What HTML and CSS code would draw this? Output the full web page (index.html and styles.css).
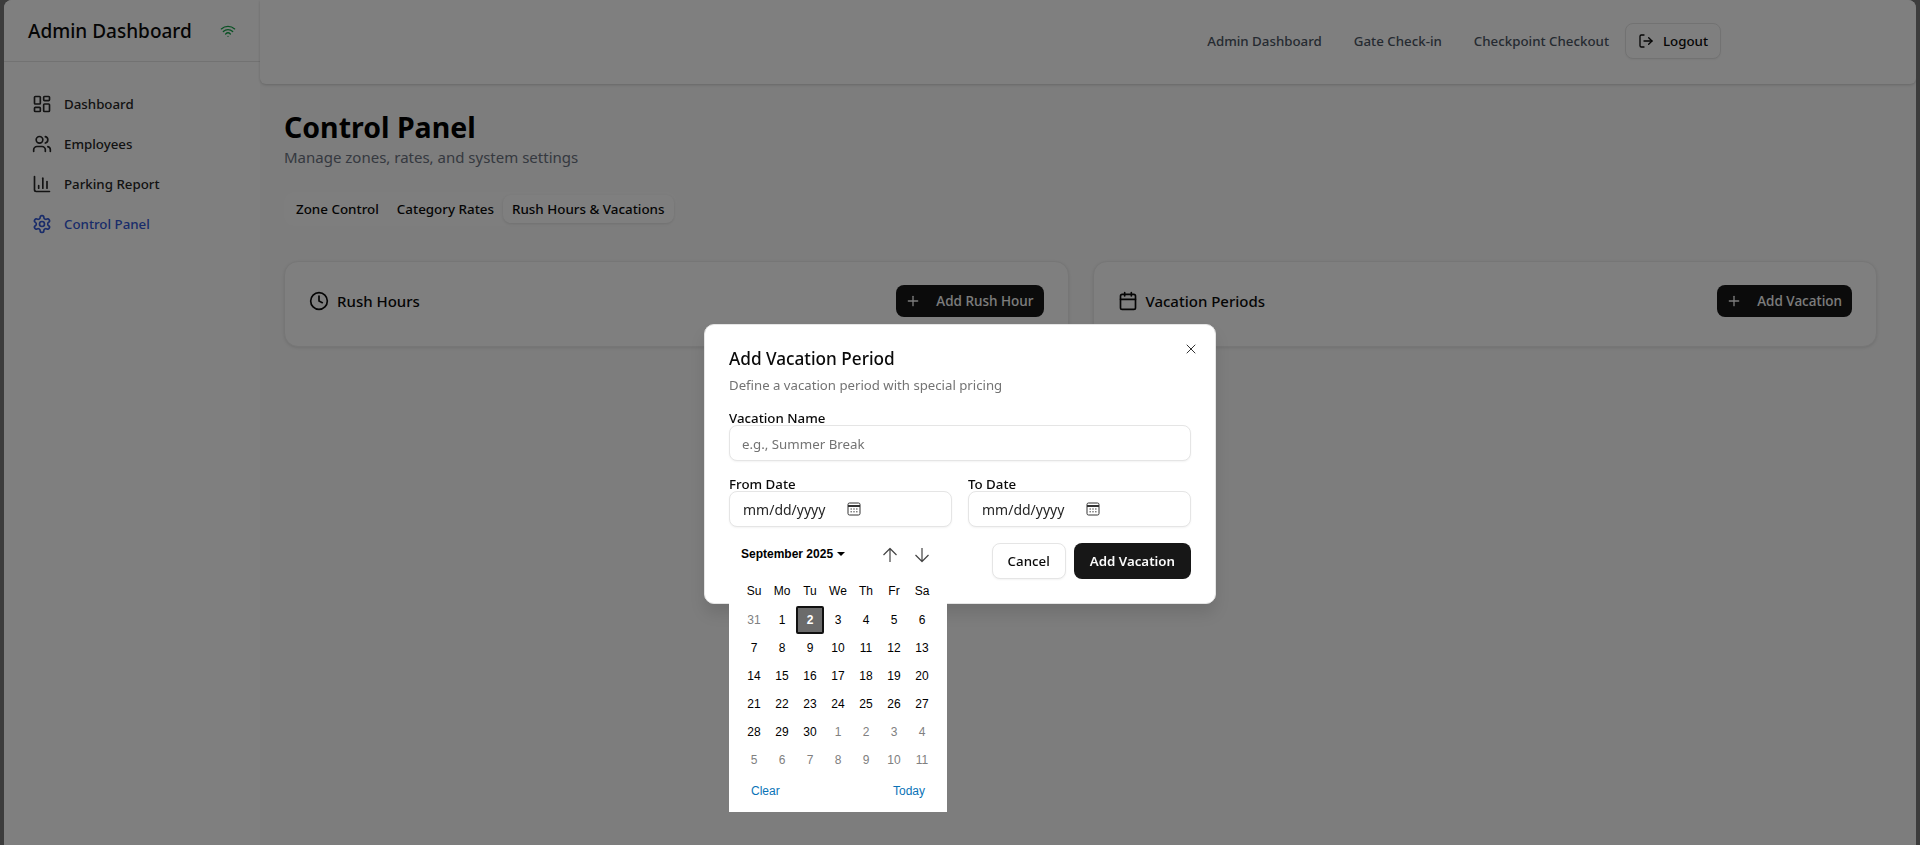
FILE: index.html
```html
<!DOCTYPE html>
<html lang="en">
<head>
    <meta charset="UTF-8">
    <meta name="viewport" content="width=device-width, initial-scale=1.0">
    <title>Admin Dashboard</title>
    <link rel="stylesheet" href="styles.css">
</head>
<body>
    <div class="window">
        <aside class="sidebar">
            <div class="sidebarHead">
                <span class="brand">Admin Dashboard</span>
                <svg class="wifiIcon" viewBox="0 0 24 24"><path d="M12 20h.01"/><path d="M2 8.82a15 15 0 0 1 20 0"/><path d="M5 12.859a10 10 0 0 1 14 0"/><path d="M8.5 16.429a5 5 0 0 1 7 0"/></svg>
            </div>
            <nav class="sideNav">
                <a class="sideLink">
                    <svg class="icon20" viewBox="0 0 24 24"><rect width="7" height="9" x="3" y="3" rx="1"/><rect width="7" height="5" x="14" y="3" rx="1"/><rect width="7" height="9" x="14" y="12" rx="1"/><rect width="7" height="5" x="3" y="16" rx="1"/></svg>
                    Dashboard
                </a>
                <a class="sideLink">
                    <svg class="icon20" viewBox="0 0 24 24"><path d="M16 21v-2a4 4 0 0 0-4-4H6a4 4 0 0 0-4 4v2"/><circle cx="9" cy="7" r="4"/><path d="M22 21v-2a4 4 0 0 0-3-3.87"/><path d="M16 3.13a4 4 0 0 1 0 7.75"/></svg>
                    Employees
                </a>
                <a class="sideLink">
                    <svg class="icon20" viewBox="0 0 24 24"><path d="M3 3v16a2 2 0 0 0 2 2h16"/><path d="M18 17V9"/><path d="M13 17V5"/><path d="M8 17v-3"/></svg>
                    Parking Report
                </a>
                <a class="sideLink active">
                    <svg class="icon20" viewBox="0 0 24 24"><path d="M12.22 2h-.44a2 2 0 0 0-2 2v.18a2 2 0 0 1-1 1.73l-.43.25a2 2 0 0 1-2 0l-.15-.08a2 2 0 0 0-2.73.73l-.22.38a2 2 0 0 0 .73 2.73l.15.1a2 2 0 0 1 1 1.72v.51a2 2 0 0 1-1 1.74l-.15.09a2 2 0 0 0-.73 2.73l.22.38a2 2 0 0 0 2.73.73l.15-.08a2 2 0 0 1 2 0l.43.25a2 2 0 0 1 1 1.73V20a2 2 0 0 0 2 2h.44a2 2 0 0 0 2-2v-.18a2 2 0 0 1 1-1.73l.43-.25a2 2 0 0 1 2 0l.15.08a2 2 0 0 0 2.73-.73l.22-.39a2 2 0 0 0-.73-2.73l-.15-.08a2 2 0 0 1-1-1.74v-.5a2 2 0 0 1 1-1.74l.15-.09a2 2 0 0 0 .73-2.73l-.22-.38a2 2 0 0 0-2.73-.73l-.15.08a2 2 0 0 1-2 0l-.43-.25a2 2 0 0 1-1-1.73V4a2 2 0 0 0-2-2z"/><circle cx="12" cy="12" r="3"/></svg>
                    Control Panel
                </a>
            </nav>
        </aside>

        <div class="mainCol">
            <header class="topBar">
                <a class="topLink">Admin Dashboard</a>
                <a class="topLink">Gate Check-in</a>
                <a class="topLink">Checkpoint Checkout</a>
                <button class="logoutBtn">
                    <svg class="icon16" viewBox="0 0 24 24"><path d="M9 21H5a2 2 0 0 1-2-2V5a2 2 0 0 1 2-2h4"/><polyline points="16 17 21 12 16 7"/><line x1="21" x2="9" y1="12" y2="12"/></svg>
                    Logout
                </button>
            </header>

            <main class="content">
                <h1 class="pageTitle">Control Panel</h1>
                <p class="pageSub">Manage zones, rates, and system settings</p>

                <div class="tabList">
                    <span class="tab">Zone Control</span>
                    <span class="tab">Category Rates</span>
                    <span class="tab selected">Rush Hours &amp; Vacations</span>
                </div>

                <div class="cardGrid">
                    <section class="card">
                        <h2 class="cardTitle">
                            <svg class="icon20" viewBox="0 0 24 24"><circle cx="12" cy="12" r="10"/><polyline points="12 6 12 12 16 14"/></svg>
                            Rush Hours
                        </h2>
                        <button class="darkBtn">
                            <svg class="icon16" viewBox="0 0 24 24"><path d="M5 12h14"/><path d="M12 5v14"/></svg>
                            Add Rush Hour
                        </button>
                    </section>
                    <section class="card">
                        <h2 class="cardTitle">
                            <svg class="icon20" viewBox="0 0 24 24"><path d="M8 2v4"/><path d="M16 2v4"/><rect width="18" height="18" x="3" y="4" rx="2"/><path d="M3 10h18"/></svg>
                            Vacation Periods
                        </h2>
                        <button class="darkBtn">
                            <svg class="icon16" viewBox="0 0 24 24"><path d="M5 12h14"/><path d="M12 5v14"/></svg>
                            Add Vacation
                        </button>
                    </section>
                </div>
            </main>
        </div>
    </div>

    <div class="overlay"></div>

    <div class="modal">
        <svg class="closeIcon" viewBox="0 0 24 24"><path d="M18 6 6 18"/><path d="m6 6 12 12"/></svg>
        <h3 class="modalTitle">Add Vacation Period</h3>
        <p class="modalSub">Define a vacation period with special pricing</p>

        <label class="fieldLabel">Vacation Name</label>
        <div class="field placeholder">e.g., Summer Break</div>

        <div class="dateRow">
            <div>
                <label class="fieldLabel">From Date</label>
                <div class="field dateField">
                    mm/dd/yyyy
                    <svg class="pickerIcon" viewBox="0 0 14 14"><rect x="1" y="1" width="12" height="12" rx="1.5"/><path d="M1 4h12" stroke-width="2"/><path d="M3.5 7h1.4M6.3 7h1.4M9.1 7h1.4M3.5 9.8h1.4M6.3 9.8h1.4M9.1 9.8h1.4"/></svg>
                </div>
            </div>
            <div>
                <label class="fieldLabel">To Date</label>
                <div class="field dateField">
                    mm/dd/yyyy
                    <svg class="pickerIcon" viewBox="0 0 14 14"><rect x="1" y="1" width="12" height="12" rx="1.5"/><path d="M1 4h12" stroke-width="2"/><path d="M3.5 7h1.4M6.3 7h1.4M9.1 7h1.4M3.5 9.8h1.4M6.3 9.8h1.4M9.1 9.8h1.4"/></svg>
                </div>
            </div>
        </div>

        <div class="modalActions">
            <button class="cancelBtn">Cancel</button>
            <button class="submitBtn">Add Vacation</button>
        </div>
    </div>

    <div class="calendar">
        <div class="calHead">
            <span class="calMonth">September 2025 <i class="caret"></i></span>
            <span class="calArrows">
                <svg class="calArrow" viewBox="0 0 16 16"><path d="M8 15V1.5M1.5 8 8 1.5 14.5 8"/></svg>
                <svg class="calArrow" viewBox="0 0 16 16"><path d="M8 1v13.5M1.5 8 8 14.5 14.5 8"/></svg>
            </span>
        </div>
        <div class="calGrid weekNames">
            <span>Su</span><span>Mo</span><span>Tu</span><span>We</span><span>Th</span><span>Fr</span><span>Sa</span>
        </div>
        <div class="calGrid">
            <span class="off">31</span><span>1</span><span class="today">2</span><span>3</span><span>4</span><span>5</span><span>6</span>
            <span>7</span><span>8</span><span>9</span><span>10</span><span>11</span><span>12</span><span>13</span>
            <span>14</span><span>15</span><span>16</span><span>17</span><span>18</span><span>19</span><span>20</span>
            <span>21</span><span>22</span><span>23</span><span>24</span><span>25</span><span>26</span><span>27</span>
            <span>28</span><span>29</span><span>30</span><span class="off">1</span><span class="off">2</span><span class="off">3</span><span class="off">4</span>
            <span class="off">5</span><span class="off">6</span><span class="off">7</span><span class="off">8</span><span class="off">9</span><span class="off">10</span><span class="off">11</span>
        </div>
        <div class="calFoot">
            <a>Clear</a>
            <a>Today</a>
        </div>
    </div>
</body>
</html>
```

FILE: styles.css
```css
* {
    box-sizing: border-box;
}

body {
    margin: 0;
    height: 845px;
    overflow: hidden;
    padding: 0 4px;
    background: #787878;
    font-family: "Noto Sans", sans-serif;
    color: #0a0a0a;
}

svg {
    fill: none;
    stroke: currentColor;
    stroke-width: 2;
    stroke-linecap: round;
    stroke-linejoin: round;
    flex-shrink: 0;
}

.icon20 {
    width: 20px;
    height: 20px;
}

.icon16 {
    width: 16px;
    height: 16px;
}

.window {
    display: flex;
    height: 100%;
    background: #fafafa;
    border-radius: 8px 8px 0 0;
    overflow: hidden;
}

/* sidebar */
.sidebar {
    width: 256px;
    flex-shrink: 0;
    background: #fff;
}

.sidebarHead {
    display: flex;
    align-items: center;
    justify-content: space-between;
    height: 62px;
    padding: 0 24px;
    border-bottom: 1px solid #e5e5e5;
}

.brand {
    font-size: 19px;
    font-weight: 500;
}

.wifiIcon {
    width: 16px;
    height: 16px;
    color: #16a34a;
}

.sideNav {
    display: flex;
    flex-direction: column;
    padding-top: 22px;
}

.sideLink {
    display: flex;
    align-items: center;
    gap: 12px;
    height: 40px;
    padding-left: 28px;
    font-size: 13.3px;
    font-weight: 500;
    color: #262626;
}

.sideLink.active {
    color: #3358d4;
}

/* top bar */
.mainCol {
    flex: 1;
    min-width: 0;
}

.topBar {
    display: flex;
    align-items: center;
    justify-content: flex-end;
    height: 84px;
    padding: 0 195px 3px 0;
    background: #fff;
    border-radius: 0 0 6px 6px;
    box-shadow: 0 1px 3px rgba(0, 0, 0, 0.18);
}

.topLink {
    font-size: 13.3px;
    font-weight: 500;
    color: #4b5563;
    margin-right: 32px;
}

.topLink:nth-child(3) {
    margin-right: 16px;
}

.logoutBtn {
    display: flex;
    align-items: center;
    gap: 9px;
    height: 36px;
    width: 96px;
    padding: 0 12px;
    font: 500 13.3px "Noto Sans", sans-serif;
    color: #0a0a0a;
    background: #fff;
    border: 1px solid #e5e5e5;
    border-radius: 8px;
    box-shadow: 0 1px 2px rgba(0, 0, 0, 0.05);
}

/* page content */
.content {
    padding: 25px 39px 0 24px;
}

.pageTitle {
    margin: 0;
    font-size: 28.5px;
    line-height: 36px;
    font-weight: 700;
    color: #000;
}

.pageSub {
    margin: 0 0 23px;
    font-size: 15px;
    line-height: 24px;
    color: #6b7280;
}

.tabList {
    display: inline-flex;
    vertical-align: top;
    height: 34px;
    padding: 3px;
    margin-bottom: 35px;
    background: #fcfcfc;
    border-radius: 10px;
}

.tab {
    display: flex;
    align-items: center;
    padding: 0 9px;
    font-size: 13.4px;
    font-weight: 500;
    border-radius: 8px;
}

.tab.selected {
    background: #fff;
    box-shadow: 0 1px 3px rgba(0, 0, 0, 0.12);
}

.cardGrid {
    display: grid;
    grid-template-columns: 1fr 1fr;
    gap: 24px;
}

.card {
    display: flex;
    align-items: flex-start;
    justify-content: space-between;
    height: 86px;
    padding: 23px 24px 0;
    background: #fff;
    border: 1px solid #ededed;
    border-radius: 14px;
    box-shadow: 0 1px 3px rgba(0, 0, 0, 0.1);
}

.cardTitle {
    display: flex;
    align-items: center;
    gap: 8px;
    height: 32px;
    margin: 0;
    font-size: 15px;
    font-weight: 500;
}

.darkBtn {
    display: flex;
    align-items: center;
    gap: 15px;
    height: 32px;
    padding: 0 10px 0 9px;
    font: 500 13.5px "Noto Sans", sans-serif;
    color: #fafafa;
    background: #171717;
    border: 0;
    border-radius: 8px;
}

/* dialog */
.overlay {
    position: fixed;
    inset: 0;
    background: rgba(0, 0, 0, 0.5);
}

.modal {
    position: absolute;
    left: 704px;
    top: 324px;
    width: 512px;
    height: 280px;
    padding: 25px 24px 0;
    background: #fff;
    border: 1px solid #e5e5e5;
    border-radius: 10px;
    box-shadow: 0 10px 15px rgba(0, 0, 0, 0.1);
}

.closeIcon {
    position: absolute;
    top: 16px;
    right: 16px;
    width: 16px;
    height: 16px;
    stroke-width: 1.5;
    color: #333;
}

.modalTitle {
    margin: 0;
    font-size: 17.2px;
    line-height: 18px;
    font-weight: 500;
}

.modalSub {
    margin: 7px 0 16px;
    font-size: 13.2px;
    line-height: 20px;
    color: #737373;
}

.fieldLabel {
    display: block;
    font-size: 13.3px;
    line-height: 14px;
    font-weight: 500;
}

.field {
    display: flex;
    align-items: center;
    height: 36px;
    padding: 0 12px;
    font-size: 13.3px;
    background: #fff;
    border: 1px solid #e5e5e5;
    border-radius: 8px;
    box-shadow: 0 1px 2px rgba(0, 0, 0, 0.05);
}

.placeholder {
    padding-top: 2px;
    color: #737373;
}

.dateRow {
    display: grid;
    grid-template-columns: 1fr 1fr;
    gap: 16px;
    margin-top: 16px;
}

.dateField {
    gap: 22px;
    padding-left: 13px;
    font-size: 14px;
    color: #262626;
}

.pickerIcon {
    width: 14px;
    height: 14px;
    stroke-width: 1;
    stroke-linecap: butt;
    color: #333;
}

.modalActions {
    display: flex;
    justify-content: flex-end;
    gap: 8px;
    margin-top: 16px;
}

.cancelBtn,
.submitBtn {
    height: 36px;
    padding: 0 16px;
    font: 500 13.3px "Noto Sans", sans-serif;
    border-radius: 8px;
}

.cancelBtn {
    padding: 0 15px;
    color: #0a0a0a;
    background: #fff;
    border: 1px solid #e5e5e5;
    box-shadow: 0 1px 2px rgba(0, 0, 0, 0.05);
}

.submitBtn {
    font-weight: 600;
    color: #fafafa;
    background: #171717;
    border: 0;
}

/* native-looking date picker */
.calendar {
    position: absolute;
    left: 729px;
    top: 531px;
    width: 218px;
    height: 281px;
    padding: 0 11px;
    background: #fff;
    font-family: "Liberation Sans", Arial, sans-serif;
    font-size: 12px;
    color: #000;
}

.calHead {
    display: flex;
    align-items: center;
    justify-content: space-between;
    height: 46px;
    padding: 0 6px 0 1px;
}

.calMonth {
    font-weight: 700;
}

.caret {
    display: inline-block;
    margin-left: 1px;
    vertical-align: 2px;
    border: 4px solid transparent;
    border-top-color: #000;
    border-bottom: 0;
}

.calArrows {
    display: flex;
    gap: 16px;
    margin-top: 2px;
}

.calArrow {
    width: 16px;
    height: 16px;
    stroke-width: 1.2;
    stroke-linecap: butt;
    color: #444;
}

.calGrid {
    display: grid;
    grid-template-columns: repeat(7, 28px);
    grid-auto-rows: 28px;
    text-align: center;
    line-height: 28px;
}

.weekNames {
    margin-bottom: 1px;
}

.calGrid .off {
    color: #808080;
}

.calGrid .today {
    font-weight: 700;
    color: #fff;
    line-height: 24px;
    background: #6b6b6b;
    border: 2px solid #111;
    border-radius: 2px;
}

.calFoot {
    display: flex;
    justify-content: space-between;
    padding: 10px 11px 0;
    color: #0a73b7;
}
```
